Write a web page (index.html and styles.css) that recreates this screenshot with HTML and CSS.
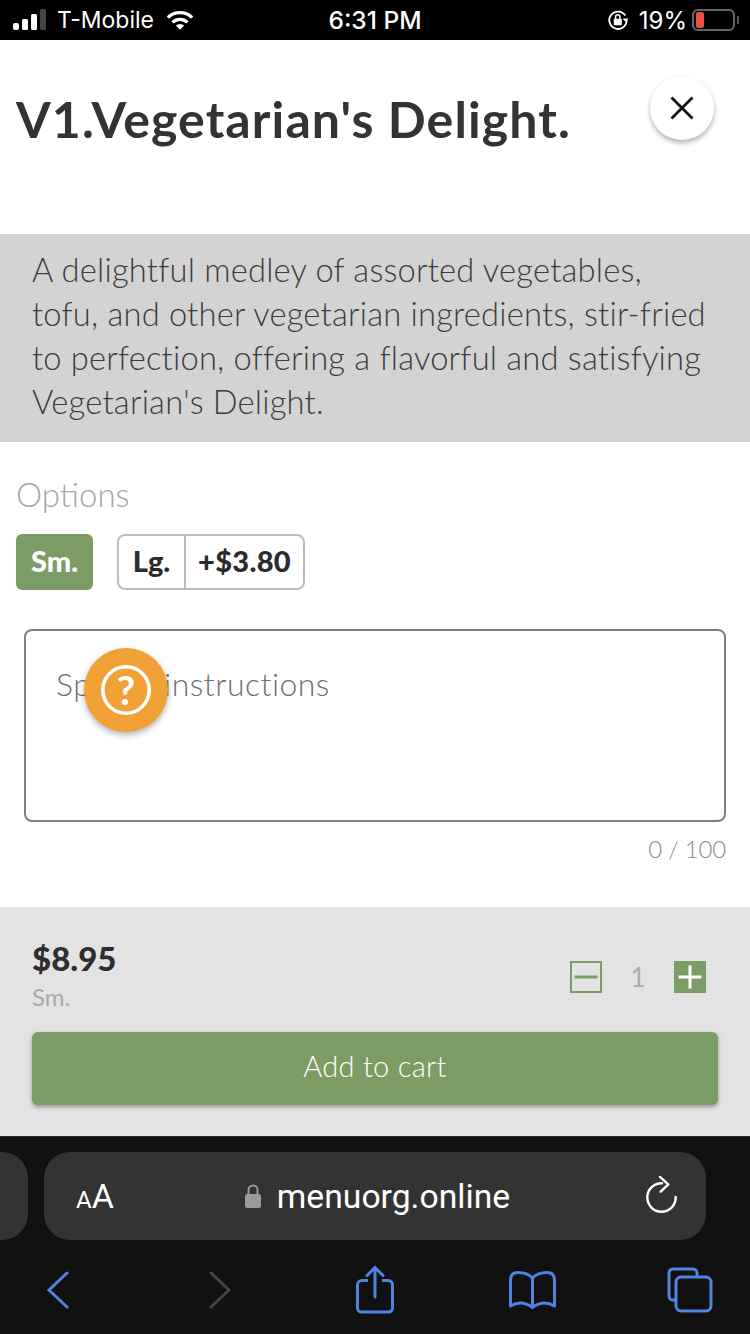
FILE: index.html
```html
<!DOCTYPE html>
<html lang="en">
<head>
<meta charset="utf-8">
<title>V1.Vegetarian's Delight.</title>
<link rel="stylesheet" href="styles.css">
</head>
<body>
<div class="phone">
  <header class="status">
    <div class="status-left">
      <svg class="signal" width="34" height="22" viewBox="0 0 34 22"><rect x="0" y="14" width="6" height="7" rx="2" fill="#fff"/><rect x="9" y="10" width="6" height="11" rx="1.5" fill="#fff"/><rect x="18" y="5" width="6" height="16" rx="1.5" fill="#fff"/><rect x="27" y="0" width="6" height="21" rx="1.5" fill="#444"/></svg>
      <span class="carrier">T-Mobile</span>
      <svg class="wifi" width="28" height="22" viewBox="0 0 30 22"><path d="M2 8.500a18.500 18.500 0 0 1 26 0" fill="none" stroke="#fff" stroke-width="3.600"/><path d="M7 13.500a11.500 11.500 0 0 1 16 0" fill="none" stroke="#fff" stroke-width="3.600"/><path d="M10.600 17L15 21.500 19.400 17a6.300 6.300 0 0 0-8.800 0z" fill="#fff"/></svg>
    </div>
    <div class="status-time">6:31 PM</div>
    <div class="status-right">
      <svg width="22" height="22" viewBox="0 0 22 22"><path d="M18.300 6.500A8.700 8.700 0 1 0 19.700 11" fill="none" stroke="#fff" stroke-width="1.800"/><path d="M15.500 9.500h6l-3 3.200z" fill="#fff"/><rect x="6.800" y="9.800" width="8" height="6.400" rx="1" fill="#fff"/><path d="M8.600 10V8a2.200 2.200 0 0 1 4.400 0v2" fill="none" stroke="#fff" stroke-width="1.500"/></svg>
      <span class="battery-pct">19%</span>
      <div class="battery"><div class="battery-level"></div></div>
      <div class="battery-cap"></div>
    </div>
  </header>

  <section class="title-area">
    <h1 class="title">V1.Vegetarian's Delight.</h1>
  </section>
  <button class="close" aria-label="Close">
    <svg width="26" height="26" viewBox="0 0 26 26"><path d="M2.500 2.500l21 21M23.500 2.500l-21 21" stroke="#111" stroke-width="2.800" fill="none"/></svg>
  </button>

  <section class="description">A delightful medley of assorted vegetables, tofu, and other vegetarian ingredients, stir-fried to perfection, offering a flavorful and satisfying Vegetarian's Delight.</section>

  <section class="options">
    <div class="options-label">Options</div>
    <div class="chips">
      <div class="chip-active"><span class="chip-text">Sm.</span></div>
      <div class="chip-group"><span class="chip-name"><span class="chip-text">Lg.</span></span><span class="chip-price"><span class="chip-text">+$3.80</span></span></div>
    </div>
  </section>

  <section class="instructions">
    <div class="textbox">Special instructions</div>
    <div class="counter">0 / 100</div>
  </section>
  <button class="help" aria-label="Help">
    <svg width="50" height="50" viewBox="0 0 50 50"><circle cx="25" cy="25" r="23.200" fill="none" stroke="#fff" stroke-width="3.600"/></svg>
    <span class="help-mark">?</span>
  </button>

  <section class="order">
    <div class="order-top">
      <div class="order-price">
        <div class="price">$8.95</div>
        <div class="size">Sm.</div>
      </div>
      <div class="stepper">
        <svg width="32" height="32" viewBox="0 0 32 32"><rect x="1" y="1" width="30" height="30" fill="none" stroke="#7b9c65" stroke-width="2"/><rect x="4.500" y="14.500" width="23" height="3" fill="#7b9c65"/></svg>
        <span class="qty">1</span>
        <svg width="32" height="32" viewBox="0 0 32 32"><rect width="32" height="32" fill="#7b9c65"/><path d="M4.500 16h23M16 4.500v23" stroke="#fff" stroke-width="3"/></svg>
      </div>
    </div>
    <button class="add"><span class="add-label">Add to cart</span></button>
  </section>

  <section class="browser">
    <div class="address-row">
      <div class="prev-tab"></div>
      <div class="address">
        <span class="aa"><small>A</small>A</span>
        <span class="url">
          <svg width="18" height="26" viewBox="0 0 18 26"><path d="M4.500 12V7a4.500 4.500 0 0 1 9 0v5" fill="none" stroke="#9a9aa0" stroke-width="2"/><rect x="1" y="11" width="16" height="14" rx="2.500" fill="#9a9aa0"/></svg>
          <span>menuorg.online</span>
        </span>
        <svg class="reload" width="32" height="38" viewBox="0 0 32 38"><path d="M16 7.300A14.200 14.200 0 1 0 29.700 21" fill="none" stroke="#fff" stroke-width="2.400" stroke-linecap="round"/><path d="M14 .9l8.300 7.400-7.600 7.400" fill="none" stroke="#fff" stroke-width="2.400" stroke-linecap="round" stroke-linejoin="round"/></svg>
      </div>
    </div>
    <nav class="toolbar">
      <svg width="24" height="38" viewBox="0 0 24 38"><path d="M21 2L3 19l18 17" fill="none" stroke="#4f84e0" stroke-width="3" stroke-linecap="round"/></svg>
      <svg class="forward" width="24" height="38" viewBox="0 0 24 38"><path d="M3 2l18 17L3 36" fill="none" stroke="#444" stroke-width="3" stroke-linecap="round"/></svg>
      <svg class="share" width="40" height="50" viewBox="0 0 40 50"><path d="M13 15.500H7A4.500 4.500 0 0 0 2.500 20v23a4 4 0 0 0 4 4h27a4 4 0 0 0 4-4V20a4.500 4.500 0 0 0-4.500-4.500h-6" fill="none" stroke="#4f84e0" stroke-width="3"/><path d="M20 32V3M12 10.500l8-8 8 8" fill="none" stroke="#4f84e0" stroke-width="3" stroke-linecap="round"/></svg>
      <svg width="50" height="42" viewBox="0 0 50 42"><path d="M25.500 9C22 5 16 3.500 11 3.500 6 3.500 3.500 6.500 3.500 11v26c7.500-4.500 15.500-3.500 22 1.500 6.500-5 14.500-6 22-1.500V11c0-4.500-2.500-7.500-7.500-7.500-5 0-11 1.500-14.500 5.500zM25.500 9v29" fill="none" stroke="#4f84e0" stroke-width="3" stroke-linejoin="round"/></svg>
      <svg width="46" height="46" viewBox="0 0 46 46"><path d="M8 33H6a4 4 0 0 1-4-4V6a4 4 0 0 1 4-4h20a4 4 0 0 1 4 4v3" fill="none" stroke="#4f84e0" stroke-width="3"/><rect x="9" y="10" width="35" height="34" rx="5" fill="none" stroke="#4f84e0" stroke-width="3"/></svg>
    </nav>
  </section>
</div>
</body>
</html>
```
FILE: styles.css
```css
* { box-sizing: border-box; }
html, body { margin: 0; padding: 0; }
body { background: #fff; font-family: Lato, "Noto Sans", sans-serif; }
button { font-family: inherit; border: 0; padding: 0; margin: 0; }

.phone { position: relative; width: 750px; height: 1334px; overflow: hidden; display: flex; flex-direction: column; }

.status { flex: 0 0 40px; background: #000; color: #fff; display: grid; grid-template-columns: 1fr auto 1fr; align-items: center; font-family: Inter, Roboto, sans-serif; font-size: 23px; }
.status-left { display: flex; align-items: center; padding-left: 13px; }
.carrier { margin-left: 10px; font-weight: 400; }
.wifi { margin-left: 12px; }
.status-time { font-weight: 500; font-size: 24.500px; }
.status-right { display: flex; align-items: center; justify-content: flex-end; padding-right: 11px; }
.battery-pct { margin-left: 10px; margin-right: 5px; font-size: 24px; }
.battery { width: 43px; height: 22px; border: 2px solid #666; border-radius: 6px; padding: 1px 2px; }
.battery-level { width: 8px; height: 100%; background: #ee4f44; border-radius: 2px; }
.battery-cap { width: 2px; height: 8px; margin-left: 2px; background: #555; }

.title-area { flex: 0 0 194px; padding: 47px 16px 0; }
.title { margin: 0; font-size: 50px; line-height: 64px; font-weight: 700; color: #333; letter-spacing: 1.1px; }
.close { position: absolute; left: 650px; top: 76px; width: 64px; height: 64px; border-radius: 50%; background: #fff; box-shadow: 0 3px 5px rgba(0,0,0,.3); display: flex; align-items: center; justify-content: center; }

.description { flex: 0 0 208px; background: #d3d3d3; color: #3c3c3c; padding: 14px 38px 0 32px; font-size: 32.700px; line-height: 44px; font-weight: 300; letter-spacing: 0.2px; }

.options { flex: 0 0 187px; padding: 32px 16px 0; }
.options-label { font-size: 33px; line-height: 40px; color: #a3a6a8; font-weight: 300; }
.chips { display: flex; margin-top: 20px; gap: 24px; }
.chip-text { position: relative; top: -2px; }
.chip-active { width: 77px; height: 56px; background: #7b9c65; color: #fff; border-radius: 6px; font-size: 29px; font-weight: 900; display: flex; align-items: center; justify-content: center; }
.chip-group { height: 56px; border: 2px solid #b9bdc1; border-radius: 8px; display: flex; align-items: stretch; font-size: 29px; font-weight: 900; color: #2b2b2b; background: #fff; }
.chip-name { width: 67px; display: flex; align-items: center; justify-content: center; border-right: 2px solid #b9bdc1; }
.chip-price { width: 117px; display: flex; align-items: center; justify-content: center; letter-spacing: 0.3px; }

.instructions { flex: 0 0 278px; padding: 0 24px; }
.textbox { height: 193px; border: 2px solid #7f7f7f; border-radius: 8px; padding: 34px 30px 0; font-size: 32px; line-height: 38px; font-weight: 300; color: #6f6f6f; letter-spacing: 0.450px; }
.counter { text-align: right; margin-top: 12px; font-size: 24px; line-height: 30px; color: #8a8a8a; font-weight: 300; letter-spacing: -0.2px; }
.help { position: absolute; left: 84px; top: 648px; width: 84px; height: 84px; border-radius: 50%; background: #f2a136; box-shadow: 0 3px 6px rgba(0,0,0,.3); display: flex; align-items: center; justify-content: center; }
.help svg { position: absolute; left: 17px; top: 17px; }
.help-mark { color: #fff; font-size: 40px; font-weight: 700; line-height: 1; }

.order { flex: 0 0 229px; background: #e3e3e3; padding: 33px 32px 0; }
.order-top { display: flex; justify-content: space-between; height: 92px; }
.price { font-size: 33px; line-height: 36px; font-weight: 900; color: #2e2e2e; }
.size { font-size: 24px; line-height: 28px; margin-top: 7px; color: #a8a8a8; font-weight: 400; }
.stepper { display: flex; align-items: center; gap: 28px; height: 32px; margin-top: 21px; margin-right: 12px; }
.qty { width: 16px; text-align: center; font-size: 26px; color: #aaa; font-weight: 400; }
.add { display: block; width: 686px; height: 73px; background: #7b9c65; color: #fff; border-radius: 6px; font-size: 29px; font-weight: 300; letter-spacing: 0.3px; box-shadow: 0 2px 4px rgba(0,0,0,.35); }
.add-label { position: relative; top: -3px; }

.browser { flex: 1; background: #111; border-top: 1px solid #2a2a2a; font-family: Roboto, Inter, sans-serif; }
.address-row { display: flex; gap: 16px; margin: 15px 0 0 -32px; height: 88px; }
.prev-tab { width: 60px; background: #333; border-radius: 26px; }
.address { width: 662px; background: #333; border-radius: 26px; display: flex; align-items: center; justify-content: space-between; padding: 0 28px 0 32px; color: #fff; }
.aa { font-size: 34px; line-height: 1; width: 40px; }
.aa small { font-size: 24px; }
.url { display: flex; align-items: center; gap: 15px; font-size: 33.700px; position: relative; left: -4px; }
.reload { margin-bottom: 2px; }
.toolbar { display: grid; grid-template-columns: repeat(5, 158px); justify-items: center; align-items: center; margin: 21px 0 0 -21px; height: 58px; }
.forward { margin-left: 8px; }
.share { margin-left: 2px; }
```
